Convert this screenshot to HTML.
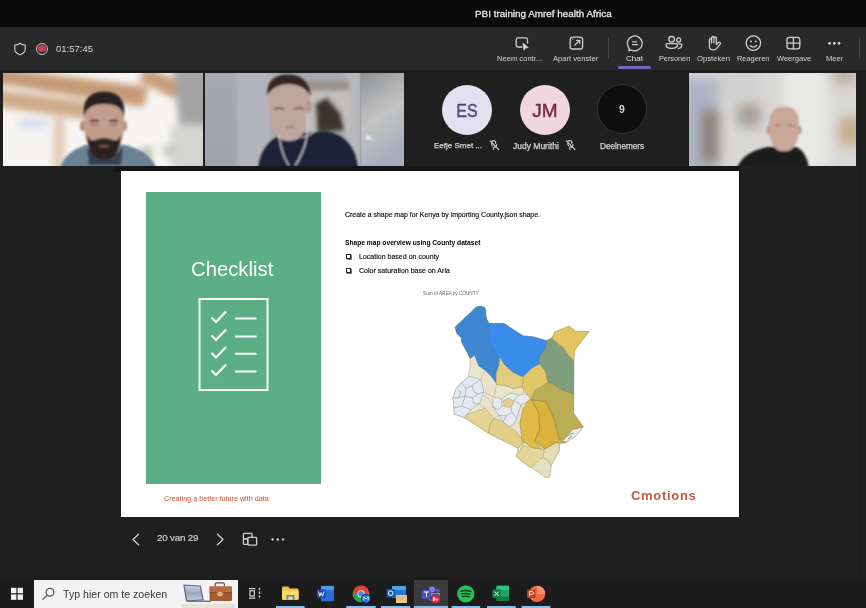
<!DOCTYPE html>
<html><head><meta charset="utf-8">
<style>
*{margin:0;padding:0;box-sizing:border-box}
html,body{width:866px;height:608px;overflow:hidden;background:#1f1f1f;font-family:"Liberation Sans",sans-serif}
.a{position:absolute}
.t{position:absolute;white-space:nowrap;line-height:1;will-change:transform}
#top{left:0;top:0;width:866px;height:27px;background:#0a0a0a}
#bar{left:0;top:27px;width:866px;height:43.3px;background:#292929}
.lbl{color:#d6d6d6;font-size:7.6px;top:55px}
.tile{position:absolute;overflow:hidden}
body>*{filter:blur(0.3px)}
body>.sl{filter:blur(0.5px)}
</style></head><body>
<div id="top" class="a"></div>
<div class="t m" style="left:475px;top:8.8px;font-size:9.9px;color:#e8e8e8;-webkit-text-stroke:0.3px #e8e8e8">PBI training Amref health Africa</div>
<div id="bar" class="a"></div>

<!-- left status -->
<svg class="a" style="left:13px;top:42px" width="14" height="14" viewBox="0 0 14 14"><path d="M7 1.3 C5.5 2.6 3.6 3 1.8 3 L1.8 7 C1.8 10 4 11.8 7 12.8 C10 11.8 12.2 10 12.2 7 L12.2 3 C10.4 3 8.5 2.6 7 1.3Z" fill="none" stroke="#c8c8c8" stroke-width="1.2"/></svg>
<div class="a" style="left:36px;top:42.5px;width:12px;height:12px;border-radius:50%;border:1.1px solid #c8c8c8"></div>
<div class="a" style="left:38.2px;top:44.7px;width:7.6px;height:7.6px;border-radius:50%;background:#d03c50"></div>
<div class="t m" style="left:56px;top:44px;font-size:9.5px;color:#d6d6d6">01:57:45</div>


<!-- toolbar icons -->
<svg class="a" style="left:0;top:0" width="866" height="71" viewBox="0 0 866 71">
 <g fill="none" stroke="#cfcfcf" stroke-width="1.3" stroke-linecap="round" stroke-linejoin="round">
  <path d="M522 47 H518 Q516.2 47 516.2 45.2 V39.5 Q516.2 37.8 518 37.8 H525.8 Q527.5 37.8 527.5 39.5 V43"/>
  <path d="M523.2 43.2 L528.3 47.6 L525.6 47.9 L524.2 50 Z" fill="#e0e0e0" stroke-width="0.8"/>
  <rect x="570.2" y="37.2" width="12.4" height="11.8" rx="2.6"/>
  <path d="M572 40 Q572 38.9 573.4 38.9" stroke-width="0.6"/>
  <path d="M575 45 L579.6 40.4 M576.5 40.3 H579.7 V43.5"/>
  <path d="M629.4 48.8 L628.7 50.6 L631 50 Q632.8 50.8 634.8 50.8 A7.4 7.4 0 1 0 628.2 46.8 Z"/>
  <path d="M632.6 41.8 H636.6 M632.6 44.6 H637.6"/>
  <circle cx="671.6" cy="39.3" r="2.8"/>
  <path d="M667 43.6 H676.4 Q677.5 43.6 677.5 44.7 Q677.5 48.4 671.7 48.4 Q666 48.4 666 44.7 Q666 43.6 667 43.6Z"/>
  <circle cx="678.6" cy="39.9" r="2"/>
  <path d="M678.5 48.4 Q681.8 48 681.8 45 Q681.8 43.8 680.6 43.8 H678.6"/>
  <path d="M709.4 45.8 V40 Q709.4 38.7 710.5 38.7 Q711.6 38.7 711.6 40 V43 V37.7 Q711.6 36.5 712.8 36.5 Q714 36.5 714 37.7 V42.8 V38.2 Q714 37 715.2 37 Q716.4 37 716.4 38.2 V44.6 L718.2 42.6 Q719.2 41.8 720.2 42.6 Q720.8 43.4 720 44.4 L716.6 48.6 Q715.4 49.8 713.4 49.8 H712.6 Q709.4 49.8 709.4 45.8Z"/>
  <circle cx="753.4" cy="43.1" r="7.2"/>
  <path d="M750 45.6 Q753.4 48.6 756.8 45.6"/>
  <rect x="787" y="37.3" width="12.8" height="11.6" rx="2.4"/>
  <path d="M793.4 37.3 V48.9 M787 43.1 H799.8"/>
 </g>
 <g fill="#dadada">
  <circle cx="751" cy="41.4" r="0.9"/><circle cx="755.8" cy="41.4" r="0.9"/>
  <circle cx="829.6" cy="43.3" r="1.35"/><circle cx="834.3" cy="43.3" r="1.35"/><circle cx="839" cy="43.3" r="1.35"/>
 </g>
</svg>
<!-- toolbar -->
<div class="t lbl m" style="left:497px">Neem contr...</div>
<div class="t lbl m" style="left:553px">Apart venster</div>
<div class="a" style="left:608px;top:37px;width:1px;height:22px;background:#4a4a4a"></div>
<div class="t lbl m" style="left:625.5px;font-size:8px;color:#e8e8e8">Chat</div>
<div class="a" style="left:618px;top:66px;width:33px;height:2.8px;border-radius:1.5px;background:#7068c0"></div>
<div class="t lbl m" style="left:658.7px;font-size:7.3px">Personen</div>
<div class="t lbl m" style="left:697.4px;font-size:7.7px">Opsteken</div>
<div class="t lbl m" style="left:737.3px;font-size:7.4px">Reageren</div>
<div class="t lbl m" style="left:776.7px;font-size:7.5px">Weergave</div>
<div class="t lbl m" style="left:826px;font-size:7.6px">Meer</div>
<div class="a" style="left:859px;top:37px;width:1px;height:22px;background:#4a4a4a"></div>

<!-- tiles -->
<svg class="a" style="left:3px;top:73px" width="200" height="93" viewBox="0 0 200 93">
 <defs><filter id="b4" x="-50%" y="-50%" width="200%" height="200%"><feGaussianBlur stdDeviation="3.5"/></filter>
 <filter id="b2" x="-50%" y="-50%" width="200%" height="200%"><feGaussianBlur stdDeviation="2"/></filter>
 <filter id="b1" x="-50%" y="-50%" width="200%" height="200%"><feGaussianBlur stdDeviation="0.9"/></filter></defs>
 <rect width="200" height="93" fill="#f7f5f2"/>
 <g filter="url(#b4)">
  <path d="M-10 -6 L145 14 L141 34 L-10 10Z" fill="#c49a76"/>
  <path d="M-10 16 L92 30 L88 47 L-10 33Z" fill="#ceaa88"/>
  <path d="M142 -6 L180 10 L172 26 L136 8Z" fill="#c89c76"/>
  <rect x="50" y="44" width="12" height="55" fill="#e2cdb8"/>
  <rect x="16" y="45" width="28" height="11" fill="#dde0ee"/>
  <path d="M170 -5 H210 V52 H176Z" fill="#a4a4a4"/>
  <rect x="168" y="52" width="40" height="50" fill="#d4d4d2"/>
  <rect x="136" y="74" width="14" height="14" fill="#c0c8b8"/>
  <rect x="160" y="72" width="12" height="12" fill="#c8ccc0"/>
 </g>
 <g filter="url(#b1)">
  <path d="M57 95 Q62 79 82 72 L123 72 Q148 79 153 95Z" fill="#6a8294"/>
  <path d="M84 74 Q101 96 120 74 L118 92 H86Z" fill="#34404c"/>
  <ellipse cx="79.5" cy="53" rx="2.6" ry="5" fill="#b48e7c"/>
  <ellipse cx="121.5" cy="53" rx="2.6" ry="5" fill="#b48e7c"/>
  <path d="M81 40 Q80 72 90 80 Q101 86 112 80 Q122 72 121 40 Q120 28 101 28 Q82 28 81 40Z" fill="#c29e8c"/>
  <path d="M81 44 Q78 19 101 18.5 Q124 19 121 44 Q119 31 101 31 Q84 31 81 44Z" fill="#2b2320"/>
  <path d="M84 62 Q85 86 101 87 Q117 86 118 62 Q115 69 110 67 Q101 63 92 67 Q87 69 84 62Z" fill="#2c221f"/><path d="M95 73 Q101 71 107 73 Q101 76 95 73Z" fill="#8a5a50"/>
  <path d="M87 48.5 Q91 46.5 96 48.5 M106 48.5 Q111 46.5 115 48.5" stroke="#3a2a25" stroke-width="1.8" fill="none"/>
  <path d="M88 52 H95 M107 52 H114" stroke="#6a4a40" stroke-width="1.2"/>
 </g>
</svg>
<svg class="a" style="left:205px;top:73px" width="199" height="93" viewBox="0 0 199 93">
 <defs><linearGradient id="door" x1="0" y1="0" x2="0.3" y2="1"><stop offset="0" stop-color="#909296"/><stop offset="0.55" stop-color="#c4c4c2"/><stop offset="1" stop-color="#a8aebc"/></linearGradient>
 <linearGradient id="wall" x1="0" y1="0" x2="0" y2="1"><stop offset="0" stop-color="#a6a9b0"/><stop offset="1" stop-color="#9ea3ae"/></linearGradient></defs>
 <rect width="199" height="93" fill="url(#wall)"/>
 <g filter="url(#b2)">
  <rect x="32" y="-5" width="34" height="105" fill="#b2b4b9"/>
  <rect x="140" y="-5" width="16" height="105" fill="#b6b7ba"/>
  <rect x="103" y="14" width="42" height="46" fill="#c2c0bc"/>
  <rect x="102" y="8" width="42" height="10" fill="#9a928a"/>
  <path d="M110 30 L122 24 L136 40 L140 58 L112 60Z" fill="#3e342e"/>
 </g>
 <rect x="155.5" y="0" width="44" height="93" fill="url(#door)"/>
 <rect x="155" y="0" width="1.2" height="93" fill="#9a9a9e" opacity="0.7"/>
 <g filter="url(#b1)"><ellipse cx="163.5" cy="64.5" rx="2.5" ry="2" fill="#f4f4f4"/><path d="M163 66 H170" stroke="#d8d8dc" stroke-width="1.2"/></g>
 <g filter="url(#b1)">
  <path d="M53 95 Q56 70 76 62 L122 58 Q150 64 153 95Z" fill="#1d2338"/>
  <path d="M84 58 Q96 70 110 58" stroke="#b8b0ac" stroke-width="1.4" fill="none"/>
  <path d="M64 32 Q62 4 84 3 Q106 3 104 30 L102 50 Q98 68 84 68 Q70 68 66 50Z" fill="#bfa59c"/>
  <path d="M62 22 Q62 1 84 1.5 Q104 2 106 24 Q100 12 84 11 Q70 11 62 22Z" fill="#352820"/>
  <path d="M102 28 Q106 26 107 32 Q107 38 102 40Z" fill="#b09890"/>
  <path d="M69 36 Q74 34 79 36 M89 36 Q94 34 99 36" stroke="#5a4844" stroke-width="1.6" fill="none"/>
  <path d="M81 55 Q85 53 89 55" stroke="#806060" stroke-width="1.2" fill="none"/>
  <path d="M102 40 Q104 58 100 72 Q96 84 90 93 M74 62 Q76 80 84 93" stroke="#e4e4e8" stroke-width="1.1" fill="none"/>
 </g>
</svg>
<svg class="a" style="left:689px;top:73px" width="167" height="93" viewBox="0 0 167 93">
 <defs><filter id="b6" x="-50%" y="-50%" width="200%" height="200%"><feGaussianBlur stdDeviation="6"/></filter></defs>
 <rect width="167" height="93" fill="#d8d8d6"/>
 <g filter="url(#b6)">
  <rect x="-10" y="5" width="40" height="95" fill="#aeb5c2"/>
  <rect x="12" y="36" width="18" height="54" fill="#8a7e74"/>
  <rect x="48" y="30" width="24" height="24" fill="#aaa098"/>
  <rect x="150" y="44" width="24" height="28" fill="#c4ae8a"/>
  <rect x="143" y="-8" width="24" height="20" fill="#c0b0a0"/>
  <rect x="95" y="-5" width="45" height="100" fill="#e8e8e6"/>
  <rect x="30" y="-5" width="40" height="30" fill="#d0d0d0"/>
 </g>
 <g filter="url(#b1)">
  <path d="M48 95 Q54 79 78 74 L108 74 Q118 80 120 95Z" fill="#1f1b1b"/>
  <path d="M84 73 Q95 84 106 73" fill="#b49080"/>
  <ellipse cx="80" cy="57" rx="2.4" ry="4.5" fill="#b89484"/>
  <ellipse cx="110" cy="57" rx="2.4" ry="4.5" fill="#b89484"/>
  <path d="M80 52 Q79 34 95 33.5 Q111 34 110 52 Q110 70 103 76 Q95 80 87 76 Q80 70 80 52Z" fill="#c9a898"/>
  <path d="M85 53 Q88 52 91 53 M99 53 Q102 52 105 53" stroke="#8a6a60" stroke-width="1.2" fill="none"/>
 </g>
</svg>
<!-- avatars -->
<div class="a" style="left:442px;top:85px;width:50px;height:50px;border-radius:50%;background:#e3e1ef"></div>
<div class="t m" style="left:442px;top:101px;width:50px;text-align:center;font-size:19px;font-weight:400;-webkit-text-stroke:0.5px #4c4a78;color:#4c4a78;transform:scaleX(0.84)">ES</div>
<div class="a" style="left:519.5px;top:85px;width:50px;height:50px;border-radius:50%;background:#efd6df"></div>
<div class="t m" style="left:519.5px;top:101px;width:50px;text-align:center;font-size:19px;font-weight:400;-webkit-text-stroke:0.5px #7a2b4a;color:#7a2b4a;transform:scaleX(1.0)">JM</div>
<div class="a" style="left:597.2px;top:83.5px;width:50px;height:50px;border-radius:50%;background:#0e0e0e;border:1.5px solid #363636"></div>
<div class="t m" style="left:597.2px;top:103.6px;width:50px;text-align:center;font-size:10.5px;font-weight:700;color:#d0d0d0">9</div>
<div class="t m" style="left:434px;top:142px;font-size:8px;-webkit-text-stroke:0.25px #d6d6d6;color:#d6d6d6">Eefje Smet ...</div>
<div class="t m" style="left:513px;top:142px;font-size:8.5px;-webkit-text-stroke:0.25px #d6d6d6;color:#d6d6d6">Judy Murithi</div>
<div class="t m" style="left:600px;top:142.5px;font-size:8.2px;-webkit-text-stroke:0.25px #d6d6d6;color:#d6d6d6">Deelnemers</div>
<svg class="a" style="left:486px;top:138px" width="95" height="14" viewBox="486 138 95 14">
 <g fill="none" stroke="#cfcfcf" stroke-width="1.1" stroke-linecap="round">
  <path d="M492.6 146 Q491.6 145.6 491.6 144 V142 Q491.6 140.6 493.6 140.6 Q495.6 140.6 495.6 142 V143.4 M496.8 144.6 Q496.4 147.4 493.6 147.4 M493.6 147.4 V149.4 M490.2 140.8 L498.8 149.6"/>
  <path d="M568.8 146 Q567.8 145.6 567.8 144 V142 Q567.8 140.6 569.8 140.6 Q571.8 140.6 571.8 142 V143.4 M573 144.6 Q572.6 147.4 569.8 147.4 M569.8 147.4 V149.4 M566.4 140.8 L575 149.6"/>
 </g>
</svg>

<!-- slide -->
<div class="sl a" style="left:113px;top:165.5px;width:627px;height:6px;background:#161616"></div>
<div class="sl a" style="left:121.3px;top:171.2px;width:617.5px;height:346.1px;background:#fff;box-shadow:1px 0 0 #0a0a0a"></div>
<div class="sl a" style="left:146px;top:192px;width:175px;height:292px;background:#5bae85"></div>
<div class="sl t m" style="left:191px;top:259px;font-size:20.3px;color:#fff">Checklist</div>

<svg class="sl a" style="left:146px;top:192px" width="175" height="292" viewBox="146 192 175 292">
 <g fill="none" stroke="#fff" stroke-width="2" stroke-linecap="butt" stroke-linejoin="miter">
  <rect x="199.5" y="299" width="68" height="91"/>
  <path d="M211.5 317.5 L216 322 L226 311.5 M211.5 335.5 L216 340 L226 329.5 M211.5 353 L216 357.5 L226 347 M211.5 370.5 L216 375 L226 364.5" stroke-width="2.2"/>
  <path d="M235 318.6 H256.5 M235 336.4 H256.5 M235 353.7 H256.5 M235 371.5 H256.5"/>
 </g>
</svg>
<div class="sl t m" style="left:345px;top:212.2px;font-size:6.94px;color:#111;-webkit-text-stroke:0.15px #111">Create a shape map for Kenya by importing County.json shape.</div>
<div class="sl t m" style="left:345px;top:240.3px;font-size:6.66px;font-weight:700;color:#000">Shape map overview using County dataset</div>
<div class="sl a" style="left:345.5px;top:254.2px;width:5.2px;height:5.2px;border:1px solid #222;box-shadow:0.8px 0.8px 0 #555"></div>
<div class="sl a" style="left:345.5px;top:268.2px;width:5.2px;height:5.2px;border:1px solid #222;box-shadow:0.8px 0.8px 0 #555"></div>
<div class="sl t m" style="left:359px;top:252.8px;font-size:7.04px;color:#111;-webkit-text-stroke:0.15px #111">Location based on county</div>
<div class="sl t m" style="left:359px;top:267.2px;font-size:7.06px;color:#111;-webkit-text-stroke:0.15px #111">Color saturation base on Aria</div>
<div class="sl t m" style="left:422.5px;top:291.8px;font-size:4.7px;color:#666">Sum of AREA by COUNTY</div>
<!--MAP-->
<svg class="sl a" style="left:440px;top:300px" width="160" height="185" viewBox="440 300 160 185">
 <g stroke-linejoin="round">
 <path d="M455.2,327.1 L476.5,306.9 L479.9,306.3 L484.5,307.5 L485.7,310.4 L485.7,315 L486.8,319.6 L489.1,323.6 L504.1,323.6 L510,327.5 L523.2,336 L532.4,336.7 L541.6,339.3 L546.2,340.7 L552.1,338 L554.7,332.1 L569.2,326.2 L575.8,331.4 L589,331.4 L574.5,350.5 L573.8,361 L573.3,392.3 L573.3,412.9 L583.2,426.9 L575.8,435.9 L568.4,440.8 L565.9,442.5 L559.3,444.1 L559.3,450.7 L551.1,465.5 L549.5,477 L545.6,477.4 L531.4,467.1 L529.9,467.3 L516.6,457 L518.1,448.1 L488.5,433.3 L464.8,417.7 L454.4,414 L453,397.8 L455.9,388.9 L461.2,382.9 L466.4,379 L468.3,376.2 L469.9,367.9 L470.4,358.5 L465,348.3 L461.5,341.4 L461.5,338 L456.9,333.4Z" fill="#e8e5cc" stroke="#b4b08c" stroke-width="0.6"/>
 <path d="M455.9,388.9 L461.2,382.9 L466.4,379 L468.3,376.2 L480.8,379.3 L483.9,391.8 L482.6,394.8 L479.6,403.7 L470.7,409.6 L466.3,414.8 L464.8,417.7 L454.4,414 L453,397.8Z" fill="#e5eaf0" stroke="#9aa2ae" stroke-width="0.55"/>
 <path d="M492.9,396.3 L501.6,399 L509.9,392.8 L519.2,394.9 L524.4,393.8 L527.6,395 L530.7,399 L527,402 L521,405.2 L516.6,418.5 L513.6,424.4 L509.2,427.4 L503.3,421.4 L498.8,415.5 L492.9,406.6Z" fill="#e5eaf0" stroke="#9aa2ae" stroke-width="0.55"/>
 <g fill="none" stroke="#8e98a8" stroke-width="0.6"><path d="M461.2,382.9 L466,388 L472,386 L480.8,379.3"/><path d="M466,388 L465,396 L458,398 L453,397.8"/><path d="M465,396 L472,398 L478,394 L483.9,391.8"/><path d="M472,398 L474,404 L479.6,403.7"/><path d="M465,396 L462,406 L454.4,408"/><path d="M462,406 L470.7,409.6"/><path d="M472,386 L474,392 L478,394"/><path d="M458,390 L461,392 L458,398"/><path d="M501.6,399 L502,406 L498,410 L492.9,406.6"/><path d="M502,406 L510,404 L514,400 L519.2,394.9"/><path d="M510,404 L512,412 L506,416 L503.3,421.4"/><path d="M512,412 L516.6,418.5"/><path d="M514,400 L521,405.2"/><path d="M506,416 L498.8,415.5"/></g>
 <g fill="none" stroke="#b0aa88" stroke-width="0.5"><path d="M480.8,379.3 L485,370"/><path d="M483.9,391.8 L492.9,396.3"/><path d="M482.6,394.8 L488,398 L492.9,406.6"/><path d="M479.6,403.7 L485.5,408.1"/><path d="M498.8,415.5 L493.7,418.5"/></g>
 <path d="M496.4,384.5 L504.7,385.5 L514,388.6 L522.4,386.6 L524.4,393.8 L519.2,394.9 L509.9,392.8 L501.6,399 L494.3,397Z" fill="#e8e4c9" stroke="#b0aa80" stroke-width="0.5"/>
 <path d="M503,401 L509,398 L514,402 L511,407 L505,407Z" fill="#e2d092" stroke="#a89a60" stroke-width="0.5"/>
 <path d="M464.8,417.7 L466.3,414.8 L485.5,408.1 L493.7,418.5 L490,424.4 L488.5,433.3Z" fill="#e4d393" stroke="#a89e60" stroke-width="0.5"/>
 <path d="M493.7,418.5 L503.3,421.4 L509.2,427.4 L516.6,431.8 L524,442.2 L518.1,448.1 L488.5,433.3 L490,424.4Z" fill="#e3cf88" stroke="#a89e60" stroke-width="0.5"/>
 <path d="M509.2,427.4 L513.6,424.4 L516.6,418.5 L521,405.2 L523.2,409.6 L519.9,422.7 L522.3,440.8 L523.2,445.8 L516.6,455.6 L516.6,457 L518.1,448.1 L524,442.2 L516.6,431.8Z" fill="#e6e3cb" stroke="#a8a480" stroke-width="0.5"/>
 <path d="M516.6,455.6 L523.2,445.8 L531.4,447.4 L541.2,449 L544.5,449 L542.9,457.3 L541.2,463.9 L531.4,467.1 L529.9,467.3 L516.6,457Z" fill="#e3d59c" stroke="#a89e60" stroke-width="0.5"/>
 <path d="M544.5,449 L556,442.5 L559.3,444.1 L559.3,450.7 L551.1,465.5 L547.8,460.6 L542.9,457.3Z" fill="#e3dcb4" stroke="#a8a070" stroke-width="0.5"/>
 <path d="M542.9,457.3 L547.8,460.6 L551.1,465.5 L549.5,477 L545.6,477.4 L531.4,467.1Z" fill="#e2dfc4" stroke="#a8a070" stroke-width="0.5"/>
 <path d="M561,432.6 L572.5,429.3 L583.2,426.9 L575.8,435.9 L568.4,440.8 L565.9,442.5 L559.3,439.2 L564.3,439.2Z" fill="#e8ecec" stroke="#909090" stroke-width="0.5"/>
 <path d="M566 437 L570 434 L574 433 M568 439 L572 436" stroke="#555" stroke-width="0.6" fill="none"/>
 <path d="M527,402 L530.7,399 L531.4,399.7 L538.8,412.9 L539.6,429.3 L534.7,440.8 L541.2,449 L531.4,447.4 L522.3,440.8 L519.9,422.7 L523.2,409.6Z" fill="#e0bb4a" stroke="#9a8a40" stroke-width="0.5"/>
 <path d="M531.4,399.7 L546.2,401.4 L554.4,419.5 L559.3,439.2 L565.9,442.5 L556,442.5 L544.5,449 L534.7,440.8 L539.6,429.3 L538.8,412.9Z" fill="#dbb23c" stroke="#8a7a30" stroke-width="0.6"/>
 <path d="M534.7,389.9 L548.2,382.1 L552.1,383.4 L562.6,390 L573.8,394 L573.3,412.9 L583.2,426.9 L572.5,429.3 L564.3,439.2 L559.3,439.2 L554.4,419.5 L546.2,401.4 L531.4,399.7 L530.7,399 L535,390Z" fill="#bcae54" stroke="#8a8040" stroke-width="0.5"/>
 <path d="M500.5,357.5 L504.7,364.7 L513,372 L521.3,376.2 L523.4,376.2 L522.4,386.6 L514,388.6 L504.7,385.5 L496.4,384.5 L495.9,382.4 L495.9,372.5 L498.5,365.8Z" fill="#e2cc80" stroke="#a89a60" stroke-width="0.5"/>
 <path d="M523.4,376.2 L531.7,367.9 L539.6,363.7 L545.5,371.6 L548.2,382.1 L535,390 L530.7,399 L527.6,395 L522.4,386.6Z" fill="#e0c866" stroke="#a89a50" stroke-width="0.5"/>
 <path d="M546.2,340.7 L552.1,338 L557.4,343.3 L563.9,347.9 L567.9,354.5 L573.8,361 L573.8,394 L562.6,390 L552.1,383.4 L548.2,382.1 L545.5,371.6 L539.6,363.7 L538.3,361 L539.6,355.8 L545.5,347.9Z" fill="#7f9e7e" stroke="#6a8060" stroke-width="0.5"/>
 <path d="M552.1,338 L554.7,332.1 L569.2,326.2 L575.8,331.4 L589,331.4 L574.5,350.5 L573.8,361 L567.9,354.5 L563.9,347.9 L557.4,343.3Z" fill="#e0c560" stroke="#a89850" stroke-width="0.5"/>
 <path d="M489.1,323.6 L504.1,323.6 L510,327.5 L523.2,336 L532.4,336.7 L541.6,339.3 L546.2,340.7 L545.5,347.9 L539.6,355.8 L538.3,361 L539.6,363.7 L531.7,367.9 L523.4,376.2 L521.3,376.2 L513,372 L504.7,364.7 L500.5,357.5 L495.3,352 L490.3,343.7 L488.6,334.5Z" fill="#3a8ceb" stroke="#3070c0" stroke-width="0.5"/>
 <path d="M455.2,327.1 L476.5,306.9 L479.9,306.3 L484.5,307.5 L485.7,310.4 L485.7,315 L486.8,319.6 L489.1,323.6 L488.6,334.5 L490.3,343.7 L495.3,352 L499.5,357 L498.5,365.8 L495.9,372.5 L495.9,382.4 L491.2,376.2 L485,370 L478.7,365.8 L474.6,354.9 L470.4,358.5 L465,348.3 L462.5,344 L461.5,341.4 L461.5,338 L456.9,333.4Z" fill="#3f87d0" stroke="#3070b0" stroke-width="0.5"/>
 </g>
</svg>
<!--/MAP-->
<div class="sl t m" style="left:164px;top:494.8px;font-size:7.2px;color:#c8502f">Creating a better future with data</div>
<div class="sl t m" style="left:631px;top:489.2px;font-size:13px;font-weight:700;letter-spacing:0.7px;color:#c4583e">Cmotions</div>

<div class="sl a" style="left:859.5px;top:71px;width:1px;height:507px;background:#181818"></div>
<!-- nav -->
<svg class="a" style="left:0;top:520px" width="300" height="40" viewBox="0 520 300 40">
 <g fill="none" stroke="#cfcfcf" stroke-width="1.3" stroke-linecap="round" stroke-linejoin="round">
  <path d="M138.5 534.2 L133 539.5 L138.5 544.8"/>
  <path d="M217.5 534.2 L223 539.5 L217.5 544.8"/>
  <rect x="243.4" y="533.4" width="8.6" height="5.4" rx="0.6"/>
  <rect x="243.4" y="538.8" width="4.4" height="5.6" rx="0.6"/>
  <rect x="248" y="537.4" width="8.6" height="7.8" rx="0.8" fill="#1f1f1f"/>
 </g>
 <g fill="#d6d6d6"><circle cx="272.6" cy="539.4" r="1.2"/><circle cx="277.8" cy="539.4" r="1.2"/><circle cx="283" cy="539.4" r="1.2"/></g>
</svg>

<div class="t m" style="left:157px;top:533px;font-size:9.8px;letter-spacing:-0.2px;color:#cfcfcf;-webkit-text-stroke:0.2px #cfcfcf">20 van 29</div>

<!-- taskbar -->
<div class="a" style="left:0;top:578px;width:866px;height:30px;background:#1c1c1c"></div>
<div class="a" style="left:33.5px;top:579.5px;width:204px;height:28.5px;background:#f3f3f3"></div>
<div class="a" style="left:413.8px;top:579.7px;width:34.3px;height:28.3px;background:#3b3b3b"></div>
<svg class="a" style="left:0;top:578px" width="866" height="30" viewBox="0 578 866 30">
 <g fill="#f4f4f4"><rect x="11" y="587.8" width="5.4" height="5.4"/><rect x="17.6" y="587.8" width="5.4" height="5.4"/><rect x="11" y="594.4" width="5.4" height="5.4"/><rect x="17.6" y="594.4" width="5.4" height="5.4"/></g>
 <g fill="none" stroke="#555" stroke-width="1.3" stroke-linecap="round"><circle cx="50" cy="592.3" r="3.9"/><path d="M47.2 595.2 L42.8 599.4"/></g>
 <defs><linearGradient id="lap" x1="0" y1="0" x2="0" y2="1"><stop offset="0" stop-color="#c8d4ea"/><stop offset="0.5" stop-color="#9aa6bc"/><stop offset="1" stop-color="#c0c8d8"/></linearGradient></defs>
 <path d="M183.2 584.6 L200.8 585.4 L203.8 600.6 L186 601.4Z" fill="#5a6a86"/>
 <path d="M184.6 585.8 L199.8 586.4 L202.4 599.6 L187.2 600.2Z" fill="url(#lap)"/>
 <path d="M186 600.8 L211 600.6 L211 602 L186.5 602Z" fill="#6a7890"/>
 <path d="M215.2 586.5 V584.2 Q215.2 582.8 216.6 582.8 H223 Q224.4 582.8 224.4 584.2 V586.5" fill="none" stroke="#6a4a38" stroke-width="1.2"/>
 <rect x="209.6" y="586.6" width="22.4" height="14.4" rx="1.2" fill="#a55c34"/>
 <rect x="209.6" y="586.6" width="22.4" height="6" rx="1" fill="#b86c40"/>
 <rect x="209.6" y="592.4" width="22.4" height="0.8" fill="#7a4020"/>
 <ellipse cx="220" cy="594" rx="3" ry="2.2" fill="#e0b070"/>
 <rect x="181" y="603.8" width="54.3" height="4.2" fill="#e6e2d8"/>
 <g fill="none" stroke="#d0d0d0" stroke-width="1.2"><path d="M249 588.6 H255.4 M249 598.2 H255.4"/><rect x="250" y="590.8" width="4.4" height="5.2"/></g>
 <g fill="#c8c8c8"><rect x="258.8" y="587.8" width="1.4" height="2.4"/><rect x="258.8" y="591.4" width="1.4" height="2.6"/><rect x="258.8" y="595.2" width="1.4" height="2.4"/></g>
 <path d="M282 588 Q282 586.6 283.4 586.6 H288.2 L289.8 588.4 H297.2 Q298.6 588.4 298.6 589.8 V598.3 Q298.6 599.7 297.2 599.7 H283.4 Q282 599.7 282 598.3Z" fill="#f2c44a"/>
 <rect x="282" y="590.8" width="16.6" height="8.9" rx="1" fill="#ffd866"/>
 <rect x="286.5" y="595" width="8" height="4.7" fill="#3a8ad8"/>
 <rect x="288.3" y="596.5" width="4.4" height="3.2" fill="#ffd866"/>
 <rect x="321" y="586" width="13" height="15.2" rx="1.2" fill="#2a6ed6"/>
 <rect x="321" y="586" width="13" height="4" rx="1" fill="#4a9af0"/>
 <rect x="317" y="589.5" width="8.6" height="8.6" rx="1" fill="#1a4ab0"/>
 <path d="M318.5 591.5 L319.8 596.2 L321.2 592.5 L322.6 596.2 L324 591.5" fill="none" stroke="#fff" stroke-width="0.9"/>
 <circle cx="361" cy="593.8" r="8.4" fill="#dd4435"/>
 <path d="M361 593.8 L352.6 593.8 A8.4 8.4 0 0 0 365.2 601.1Z" fill="#2ea44f"/>
 <path d="M361 593.8 L365.2 601.1 A8.4 8.4 0 0 0 369.4 593.8 L361 593.8Z" fill="#f8c21a"/>
 <path d="M361 593.8 L352.6 593.8 A8.4 8.4 0 0 0 352.6 593.8Z" fill="#2ea44f"/>
 <circle cx="361" cy="593.8" r="3.6" fill="#fff"/><circle cx="361" cy="593.8" r="2.8" fill="#4a86e8"/>
 <circle cx="366" cy="598.6" r="4.6" fill="#1a73e8" stroke="#1c1c1c" stroke-width="0.8"/>
 <path d="M363.8 600.4 V596.8 L366 599 L368.2 596.8 V600.4" fill="none" stroke="#fff" stroke-width="0.8"/>
 <rect x="392" y="586" width="14" height="12" rx="1" fill="#1f7ad8"/>
 <rect x="392" y="586" width="14" height="4" fill="#48a6f0"/>
 <rect x="386.5" y="589" width="8.5" height="8.5" rx="1" fill="#0f5ab8"/>
 <circle cx="390.7" cy="593.2" r="2.3" fill="none" stroke="#fff" stroke-width="1"/>
 <rect x="396" y="595" width="11" height="8" fill="#e8c890"/>
 <path d="M396 595 L401.5 599.5 L407 595" fill="none" stroke="#c8a060" stroke-width="0.8"/>
 <circle cx="432" cy="589.6" r="3" fill="#7b83eb"/>
 <circle cx="437.6" cy="590.8" r="2.2" fill="#5059c9"/>
 <path d="M429 593 H440 V598 Q440 602 434.5 602 Q429 602 429 598Z" fill="#7b83eb"/>
 <rect x="422" y="590" width="9" height="9" rx="1" fill="#4b53bc"/>
 <path d="M424 592 H429 M426.5 592 V597" stroke="#fff" stroke-width="1"/>
 <circle cx="435.6" cy="599" r="4.8" fill="#d4263c" stroke="#3b3b3b" stroke-width="0.8"/>
 <text x="435.6" y="601.2" font-family="Liberation Sans" font-size="5.5" font-weight="700" fill="#fff" text-anchor="middle">9+</text>
 <circle cx="465.8" cy="593.9" r="8.6" fill="#22c45a"/>
 <circle cx="465.8" cy="593.9" r="7.2" fill="#2a2a2a" opacity="0"/>
 <g fill="none" stroke="#1c3a20" stroke-width="1.3" stroke-linecap="round"><path d="M461 591.2 Q466 589.6 471 591.6"/><path d="M461.6 594 Q466 592.8 470.2 594.4"/><path d="M462.2 596.6 Q466 595.7 469.4 596.9"/></g>
 <rect x="496.5" y="585.8" width="12.6" height="15" rx="1.2" fill="#21a366"/>
 <rect x="496.5" y="585.8" width="12.6" height="4" fill="#33c481"/>
 <rect x="496.5" y="596.8" width="12.6" height="4" fill="#107c41"/>
 <rect x="492.3" y="589.5" width="8.5" height="8.5" rx="1" fill="#107c41"/>
 <path d="M494.3 591.5 L498.8 596 M498.8 591.5 L494.3 596" stroke="#fff" stroke-width="1"/>
 <circle cx="537" cy="593.9" r="8.2" fill="#ed6c47"/>
 <path d="M537 585.7 A8.2 8.2 0 0 1 545.2 593.9 H537Z" fill="#ff8f6b"/>
 <rect x="527" y="589.5" width="8.5" height="8.5" rx="1" fill="#c43e1c"/>
 <path d="M529.6 596.4 V591.4 H531.8 Q533.4 591.4 533.4 592.9 Q533.4 594.4 531.8 594.4 H529.6" fill="none" stroke="#fff" stroke-width="0.9"/>
 <g fill="#8cc0ec"><rect x="276" y="606" width="28.6" height="2"/><rect x="346.2" y="606" width="29.5" height="2"/><rect x="381" y="606" width="29.3" height="2"/><rect x="413.8" y="606" width="34.3" height="2"/><rect x="451.6" y="606" width="28.6" height="2"/><rect x="487" y="606" width="28.7" height="2"/><rect x="521.7" y="606" width="28.6" height="2"/></g>
</svg>
<div class="t m" style="left:63px;top:588.7px;font-size:10.6px;color:#3a3a3a">Typ hier om te zoeken</div>
</body></html>
